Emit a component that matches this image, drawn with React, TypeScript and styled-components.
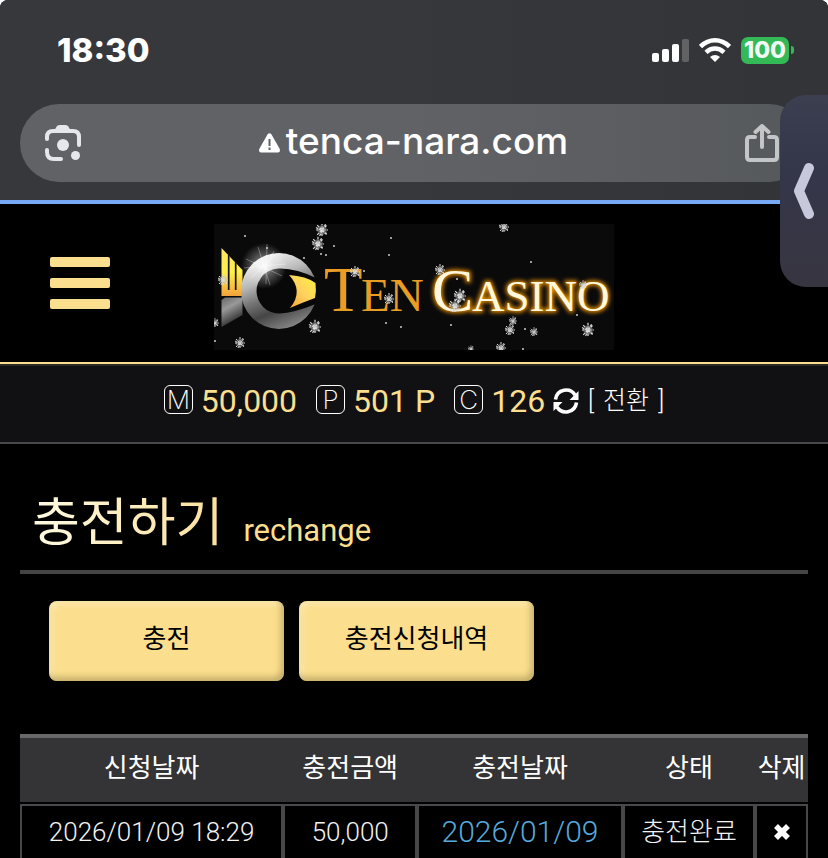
import React from "react";
import styled, { createGlobalStyle } from "styled-components";

const GOLD = "#fbdf8e";

const GlobalStyle = createGlobalStyle`
  * { box-sizing: border-box; }
  html { background: #fff; scrollbar-width: none; }
  body { margin: 0; font-family: Roboto, "Noto Sans CJK KR", sans-serif; color: #fff; }
  button { font: inherit; color: inherit; border: 0; padding: 0; background: none; cursor: pointer; }
  svg { display: block; flex: none; }
`;

const Screen = styled.div`
  position: relative;
  height: 100vh;
  overflow: hidden;
  background: #000;
  border-radius: 8px 8px 0 0;
`;

const BrowserChrome = styled.div`
  background: linear-gradient(90deg, #37383c 40%, #333437);
  border-bottom: 4px solid #77a9f6;
  font-family: Inter, "Liberation Sans", sans-serif;
`;

const StatusBar = styled.div`
  display: flex;
  align-items: center;
  justify-content: space-between;
  height: 104px;
  padding: 0 34px 4px 57px;
`;

const Clock = styled.time`
  font-size: 33px;
  font-weight: 800;
  line-height: 40px;
`;

const StatusIcons = styled.div`
  display: flex;
  align-items: center;
  gap: 10px;
`;

const Battery = styled.div`
  display: flex;
  align-items: center;
  gap: 2px;
`;

const BatteryLevel = styled.span`
  width: 48px;
  height: 27px;
  border-radius: 7px;
  background: #34b957;
  color: #f2f8f2;
  font-size: 23px;
  font-weight: 800;
  line-height: 27px;
  text-align: center;
`;

const BatteryTip = styled.span`
  width: 3px;
  height: 8px;
  border-radius: 0 3px 3px 0;
  background: #34b957;
`;

const AddressBar = styled.div`
  display: grid;
  grid-template-columns: 38px 1fr 34px;
  align-items: center;
  height: 78px;
  margin: 0 20px 18px;
  padding: 0 29px 0 24px;
  border-radius: 39px;
  background: linear-gradient(90deg, #616266 50%, #56595b);
`;

const Address = styled.div`
  display: flex;
  align-items: center;
  justify-content: center;
  gap: 6px;
  padding-bottom: 4px;
  font-size: 37px;
  font-weight: 500;
  line-height: 48px;

  svg { margin-top: 4px; }
`;

const SideHandle = styled.button`
  position: absolute;
  top: 95px;
  right: 0;
  display: flex;
  align-items: center;
  justify-content: center;
  width: 48px;
  height: 192px;
  border-radius: 26px 0 0 26px;
  background: linear-gradient(#3b3f50, #34364a 40%, #373540);
`;

const SiteHeader = styled.header`
  display: grid;
  grid-template-columns: 110px 1fr 110px;
  align-items: center;
  padding: 20px 0 12px;
  border-bottom: 2px solid ${GOLD};
`;

const MenuButton = styled.button`
  display: grid;
  gap: 11px;
  width: 60px;
  margin: 0 0 8px 50px;
`;

const MenuLine = styled.span`
  height: 10px;
  border-radius: 2px;
  background: ${GOLD};
`;

const LogoLink = styled.a`
  justify-self: center;
`;

const BalanceBar = styled.section`
  display: flex;
  align-items: center;
  justify-content: center;
  height: 80px;
  padding-bottom: 6px;
  border-top: 2px solid #2a2a22;
  border-bottom: 2px solid #48484a;
  background: #111113;
  font-size: 32px;
  line-height: 40px;
`;

const Balance = styled.span`
  display: flex;
  align-items: center;
  gap: 8px;
  margin-right: 19px;
  color: ${GOLD};

  &:last-of-type { margin-right: 8px; }
`;

const Badge = styled.abbr`
  width: 29px;
  height: 29px;
  margin-bottom: 4px;
  border: 1px solid #fff;
  border-radius: 6px;
  color: #fff;
  font-family: Inter, sans-serif;
  font-size: 26px;
  font-weight: 200;
  line-height: 27px;
  text-align: center;
`;

const ConvertButton = styled.button`
  display: flex;
  align-items: center;
  gap: 9px;
  font-size: 25px;
  font-weight: 300;
  line-height: 32px;
`;

const Main = styled.main`
  padding: 0 20px;
`;

const TitleRow = styled.div`
  display: flex;
  align-items: baseline;
  gap: 20px;
  height: 130px;
  padding: 42px 12px 0;
  border-bottom: 4px solid #444445;
`;

const Title = styled.h1`
  margin: 0;
  font-size: 52px;
  font-weight: 400;
  line-height: 76px;
  color: transparent;
  background: linear-gradient(90deg, #fffbe2, #fbe09a);
  background-clip: text;
`;

const Subtitle = styled.span`
  color: ${GOLD};
  font-size: 31px;
`;

const Tabs = styled.div`
  display: flex;
  gap: 15px;
  padding: 27px 29px 53px;
`;

const TabButton = styled.button`
  flex: 0 1 235px;
  height: 80px;
  padding-bottom: 9px;
  border-radius: 8px;
  background: ${GOLD};
  box-shadow: inset -3px -4px 6px #a08d5099, inset 3px 3px 6px #ffffff55;
  color: #000;
  font-size: 26px;
`;

const HistoryTable = styled.table`
  width: 100%;
  table-layout: fixed;
  border-spacing: 0;
  font-size: 26px;
  line-height: 32px;
  text-align: center;
  white-space: nowrap;
`;

const Column = styled.col<{ $share: number }>`
  width: ${(p) => p.$share}%;
`;

const HeadCell = styled.th`
  height: 70px;
  padding: 0 0 4px;
  border-top: 4px solid #68686a;
  border-bottom: 2px solid #000;
  background: #343335;
  font-weight: 400;
`;

const Cell = styled.td<{ $done?: boolean }>`
  height: 60px;
  padding: 0 0 5px;
  border: 2px solid #48484a;
  color: ${(p) => (p.$done ? "#57a9dc" : "#f2f2f2")};
  font-size: ${(p) => (p.$done ? 30 : 26)}px;
  font-weight: 300;
`;

const DeleteButton = styled.button`
  display: block;
  margin: 0 auto;
`;

const LensIcon = () => (
  <svg width="38" height="38" viewBox="0 0 38 38" fill="none" stroke="#e6e7ec" strokeWidth="4" strokeLinecap="round">
    <path d="M3 15v-2q0-6 6-6h20q6 0 6 6v8" />
    <path d="M3 26v2q0 7 7 7h7" />
    <path d="M10 7l3-5q1-1 3-1h5q2 0 3 1l3 5z" fill="#e6e7ec" stroke="none" />
    <circle cx="19" cy="21" r="6" fill="#e6e7ec" stroke="none" />
    <circle cx="31.500" cy="31.500" r="4.500" fill="#e6e7ec" stroke="none" />
  </svg>
);

const WarningIcon = () => (
  <svg width="21" height="20" viewBox="0 0 21 20">
    <path d="M8.500 1.500q2-2.500 4 0l8 14q1.500 4-2.500 4h-15q-4 0-2.500-4z" fill="#fff" />
    <path d="M10.500 6v7M10.500 14.500v2.500" stroke="#616266" strokeWidth="2" />
  </svg>
);

const ShareIcon = () => (
  <svg width="34" height="38" viewBox="0 0 34 38" fill="none" stroke="#c3c5c7" strokeWidth="4" strokeLinecap="round" strokeLinejoin="round">
    <path d="M10 13H5q-3 0-3 3v17q0 3 3 3h24q3 0 3-3V16q0-3-3-3h-5M17 23V3M10.500 8L17 2l6.500 6" />
  </svg>
);

const SignalIcon = () => (
  <svg width="37" height="23" viewBox="0 0 37 23" fill="#fff">
    <rect y="14" width="7" height="9" rx="2" />
    <rect x="10" y="10" width="7" height="13" rx="2" />
    <rect x="20" y="5" width="7" height="18" rx="2" />
    <rect x="30" width="7" height="23" rx="2" fill="#626265" />
  </svg>
);

const WifiIcon = () => (
  <svg width="32" height="24" viewBox="0 0 32 24" fill="none" stroke="#fff" strokeWidth="4.500">
    <path d="M1.500 8.500Q8 2.300 16 2.300T30.500 8.500" />
    <path d="M7 14.300Q11 10.500 16 10.500T25 14.300" />
    <path d="M11 19Q16 15 21 19L16 24z" fill="#fff" stroke="none" />
  </svg>
);

const RefreshIcon = () => (
  <svg width="26" height="26" viewBox="0 0 26 26" fill="none" stroke="#fff" strokeWidth="3.600">
    <path d="M2.500 11.500C4 1 17 -1 22 7M23.500 14.500C22 25 9 27 4 19" />
    <path d="M25.500 3v9h-9zM0.500 23v-9h9z" fill="#fff" stroke="none" />
  </svg>
);

const flakes = [
  [108, 6, 6], [104, 20, 6], [141, 48, 5], [175, 75, 5], [101, 103, 6], [26, 119, 5], [9, 56, 5],
  [1, 99, 4], [290, 3, 5], [226, 46, 5], [246, 72, 6], [241, 82, 6], [299, 97, 4], [296, 106, 5],
  [320, 108, 4], [374, 106, 6], [287, 124, 5], [257, 125, 3], [369, 61, 4],
];
const specks = [
  [31, 12], [53, 24], [90, 34], [112, 31], [120, 22], [107, 30], [177, 14], [175, 31], [172, 99],
  [187, 103], [317, 38], [243, 55], [237, 101], [311, 105], [363, 91], [1, 117], [150, 47], [309, 125],
];

const Logo = () => (
  <svg width="400" height="126" viewBox="0 0 400 126" role="img" aria-label="Ten Casino">
    <defs>
      <linearGradient id="silver" x1="0.200" y1="0" x2="0.600" y2="1">
        <stop offset="0" stopColor="#fff" />
        <stop offset="0.350" stopColor="#b8b8b8" />
        <stop offset="0.550" stopColor="#777" />
        <stop offset="0.750" stopColor="#454545" />
        <stop offset="1" stopColor="#858585" />
      </linearGradient>
      <linearGradient id="gold" x1="0" y1="0" x2="0" y2="1">
        <stop offset="0" stopColor="#ffe46a" />
        <stop offset="0.500" stopColor="#fff04a" />
        <stop offset="1" stopColor="#f2a23c" />
      </linearGradient>
      <linearGradient id="steel" x1="0" y1="0" x2="0.400" y2="1">
        <stop offset="0" stopColor="#666" />
        <stop offset="0.400" stopColor="#999" />
        <stop offset="1" stopColor="#222" />
      </linearGradient>
      <linearGradient id="iris" x1="0" y1="1" x2="1" y2="0">
        <stop offset="0" stopColor="#f0a436" />
        <stop offset="0.500" stopColor="#ffd25e" />
        <stop offset="1" stopColor="#fff23e" />
      </linearGradient>
      <radialGradient id="flare">
        <stop offset="0" stopColor="#fff" stopOpacity="0.900" />
        <stop offset="0.400" stopColor="#fff" stopOpacity="0.350" />
        <stop offset="1" stopColor="#fff" stopOpacity="0" />
      </radialGradient>
      <filter id="glow" x="-10%" y="-30%" width="120%" height="160%">
        <feGaussianBlur stdDeviation="2" />
      </filter>
      <g id="flake">
        <circle r="4" fill="#bbb" opacity="0.450" />
        <path d="M-5 0H5M0-6V6M-4-4L4 4M-4 4L4-4M-5-2L4 3M-2 5L3-5" stroke="#ddd" strokeWidth="1" strokeDasharray="2 1" />
      </g>
    </defs>
    <rect width="400" height="126" fill="#0a0a0b" />
    <path d="M7.500 24L28.500 46V72H7.500z" fill="url(#gold)" />
    <path d="M14.700 31V66M21.700 38V66" stroke="#17140a" strokeWidth="1.700" />
    <path d="M7.500 76L11 73.500H28.500V91L7.500 103z" fill="url(#steel)" />
    <circle cx="65" cy="67" r="38" fill="url(#silver)" />
    <path d="M65 44.500A22.500 22.500 0 1 0 65 89.500Q80 89 103 79.500V54.500Q82 44 65 44.500z" fill="#080808" />
    <path d="M75 51Q92 52 101.500 59Q102.500 67 101 74Q90 78 76 84Q90 67 75 51z" fill="url(#iris)" />
    <circle cx="50" cy="42" r="23" fill="url(#flare)" />
    <path d="M53 20L52 60M32 35L68 52M37 54L63 29M44 23L56 61M30 44L72 40M60 27L45 57" stroke="#fff" strokeWidth="0.700" opacity="0.450" />
    <g fontFamily="Liberation Serif, serif">
      <g fill="#e99d25">
        <text x="110" y="87" fontSize="63">T</text>
        <text x="147" y="87" fontSize="47">EN</text>
      </g>
      <g fill="#e99000" stroke="#e99000" strokeWidth="3" filter="url(#glow)" aria-hidden="true">
        <text x="218" y="87" fontSize="62">C</text>
        <text x="258" y="87" fontSize="45">ASINO</text>
      </g>
      <g fill="#fff8dd">
        <text x="218" y="87" fontSize="62">C</text>
        <text x="258" y="87" fontSize="45">ASINO</text>
      </g>
    </g>
    {flakes.map(([x, y, r]) => (
      <use key={`${x}-${y}`} href="#flake" transform={`translate(${x} ${y}) scale(${r / 5})`} />
    ))}
    {specks.map(([x, y]) => (
      <circle key={`${x}-${y}`} cx={x} cy={y} r="1" fill="#ccc" />
    ))}
  </svg>
);

const balances = [
  { code: "M", name: "Money", value: "50,000" },
  { code: "P", name: "Point", value: "501 P" },
  { code: "C", name: "Coupon", value: "126" },
];

const columns = [
  { label: "신청날짜", share: 33.4 },
  { label: "충전금액", share: 17 },
  { label: "충전날짜", share: 26.1 },
  { label: "상태", share: 16.8 },
  { label: "삭제", share: 6.7 },
];

export default function App() {
  return (
    <>
      <GlobalStyle />
      <Screen>
        <BrowserChrome>
          <StatusBar>
            <Clock>18:30</Clock>
            <StatusIcons>
              <SignalIcon />
              <WifiIcon />
              <Battery>
                <BatteryLevel>100</BatteryLevel>
                <BatteryTip />
              </Battery>
            </StatusIcons>
          </StatusBar>
          <AddressBar>
            <button aria-label="Lens"><LensIcon /></button>
            <Address><WarningIcon />tenca-nara.com</Address>
            <button aria-label="Share"><ShareIcon /></button>
          </AddressBar>
        </BrowserChrome>

        <SiteHeader>
          <MenuButton aria-label="Menu">
            <MenuLine /><MenuLine /><MenuLine />
          </MenuButton>
          <LogoLink href="#"><Logo /></LogoLink>
        </SiteHeader>

        <BalanceBar>
          {balances.map((b) => (
            <Balance key={b.code}>
              <Badge aria-label={b.name}>{b.code}</Badge>
              {b.value}
            </Balance>
          ))}
          <ConvertButton>
            <RefreshIcon />
            <span>[</span><span>전환</span><span>]</span>
          </ConvertButton>
        </BalanceBar>

        <Main>
          <TitleRow>
            <Title>충전하기</Title>
            <Subtitle>rechange</Subtitle>
          </TitleRow>
          <Tabs>
            <TabButton>충전</TabButton>
            <TabButton>충전신청내역</TabButton>
          </Tabs>
          <HistoryTable>
            <colgroup>
              {columns.map((c) => <Column key={c.label} $share={c.share} />)}
            </colgroup>
            <thead>
              <tr>{columns.map((c) => <HeadCell key={c.label} scope="col">{c.label}</HeadCell>)}</tr>
            </thead>
            <tbody>
              <tr>
                <Cell>2026/01/09 18:29</Cell>
                <Cell>50,000</Cell>
                <Cell $done>2026/01/09</Cell>
                <Cell>충전완료</Cell>
                <Cell>
                  <DeleteButton aria-label="삭제">
                    <svg width="18" height="18" viewBox="0 0 18 18">
                      <path d="M3 3L15 15M15 3L3 15" stroke="#fff" strokeWidth="5.500" />
                    </svg>
                  </DeleteButton>
                </Cell>
              </tr>
            </tbody>
          </HistoryTable>
        </Main>

        <SideHandle aria-label="Open side panel">
          <svg width="22" height="58" viewBox="0 0 22 58" fill="none" stroke="#c8c8dc" strokeWidth="10" strokeLinecap="round" strokeLinejoin="round">
            <path d="M16 6L6 29L16 52" />
          </svg>
        </SideHandle>
      </Screen>
    </>
  );
}
